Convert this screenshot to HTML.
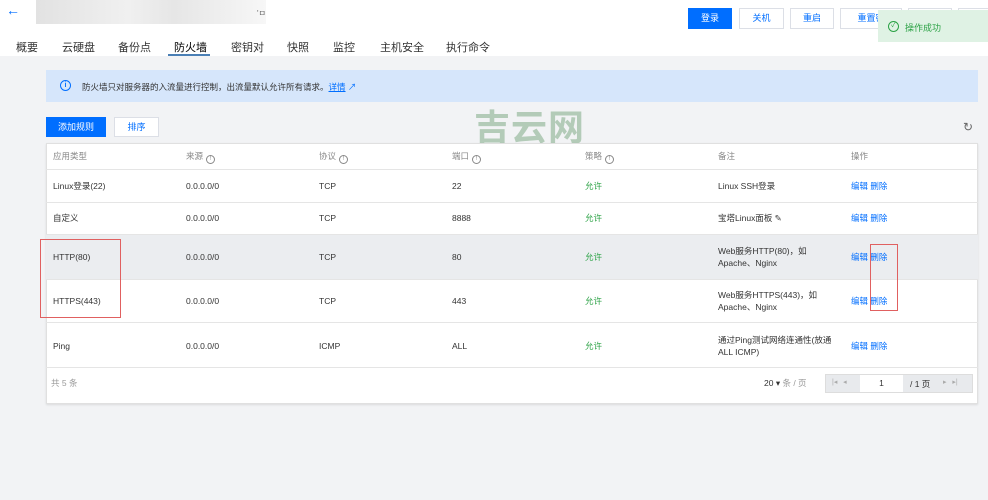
<!DOCTYPE html><html><head><meta charset="utf-8"><style>
*{margin:0;padding:0;box-sizing:border-box}
body{width:988px;height:500px;overflow:hidden;background:#f2f3f5;font-family:"Liberation Sans","Noto Sans CJK SC",sans-serif;font-size:9px;color:#333;position:relative}
.a{position:absolute}
.btn{position:absolute;height:21px;line-height:19px;text-align:center;border:1px solid #dcdfe6;background:#fff;color:#006eff;font-size:9px}
.tab{position:absolute;top:39px;font-size:11px;color:#333}
.row{position:absolute;left:46px;width:932px;border-bottom:1px solid #e5e5e5}
.c{position:absolute;font-size:8.5px;color:#333;line-height:12px}
.g{color:#2ba245}.l{color:#006eff}
.i{display:inline-block;width:9px;height:9px;border:1px solid #888;border-radius:50%;font-size:6px;line-height:7px;text-align:center;vertical-align:-1px;margin-left:3px;color:#888}
</style></head><body>
<div class="a" style="left:0;top:0;width:988px;height:56px;background:#fff"></div>
<div class="a" style="left:6px;top:2px;font-size:14px;color:#006eff">←</div>
<div class="a" style="left:36px;top:0;width:230px;height:24px;background:linear-gradient(90deg,#e2e2e2,#f0f0f0 40%,#e6e6e6 60%,#f7f7f7)"></div>
<div class="a" style="left:257px;top:8px;font-size:8px;color:#666">'ㅁ</div>
<div class="btn" style="left:688px;top:8px;width:44px;background:#006eff;color:#fff;border-color:#006eff">登录</div>
<div class="btn" style="left:739px;top:8px;width:45px">关机</div>
<div class="btn" style="left:790px;top:8px;width:44px">重启</div>
<div class="btn" style="left:840px;top:8px;width:62px">重置密</div>
<div class="btn" style="left:908px;top:8px;width:44px"></div>
<div class="btn" style="left:958px;top:8px;width:40px"></div>
<div class="a" style="left:878px;top:10px;width:110px;height:32px;background:#dff2e4"></div>
<div class="a" style="left:888px;top:21px;width:11px;height:11px;border:1.3px solid #2ba245;border-radius:50%;color:#2ba245;font-size:7px;line-height:8px;text-align:center">✓</div>
<div class="a" style="left:905px;top:21px;font-size:9px;color:#2ba245">操作成功</div>
<div class="tab" style="left:16px">概要</div><div class="tab" style="left:62px">云硬盘</div><div class="tab" style="left:118px">备份点</div>
<div class="tab" style="left:174px;color:#000">防火墙</div>
<div class="a" style="left:168px;top:54px;width:42px;height:2px;background:#4a7fb5"></div>
<div class="tab" style="left:231px">密钥对</div><div class="tab" style="left:287px">快照</div><div class="tab" style="left:333px">监控</div><div class="tab" style="left:380px">主机安全</div><div class="tab" style="left:446px">执行命令</div>
<div class="a" style="left:46px;top:70px;width:932px;height:32px;background:#d6e6fb"></div>
<div class="a" style="left:60px;top:80px;width:11px;height:11px;border:1.2px solid #006eff;border-radius:50%;color:#006eff;font-size:7px;line-height:9px;text-align:center;font-weight:bold">i</div>
<div class="a" style="left:82px;top:81px;font-size:8.5px;color:#333">防火墙只对服务器的入流量进行控制，出流量默认允许所有请求。<span class="l" style="text-decoration:underline">详情</span> <span class="l">↗</span></div>
<div class="btn" style="left:46px;top:117px;width:60px;height:20px;background:#006eff;color:#fff;border-color:#006eff">添加规则</div>
<div class="btn" style="left:114px;top:117px;width:45px;height:20px">排序</div>
<div class="a" style="left:474px;top:106px;font-size:36px;line-height:44px;color:#b3cbb8;font-weight:bold;letter-spacing:1px">吉云网</div>
<div class="a" style="left:963px;top:120px;font-size:12px;color:#666">↻</div>
<div class="a" style="left:46px;top:143px;width:932px;height:261px;background:#fff;border:1px solid #e0e0e0;box-shadow:0 1px 2px rgba(0,0,0,.1)"></div>
<div class="row" style="top:143px;height:27px"></div>
<div class="c" style="left:53px;top:150px;color:#888">应用类型</div><div class="c" style="left:186px;top:150px;color:#888">来源<span class="i">!</span></div><div class="c" style="left:319px;top:150px;color:#888">协议<span class="i">!</span></div><div class="c" style="left:452px;top:150px;color:#888">端口<span class="i">!</span></div><div class="c" style="left:585px;top:150px;color:#888">策略<span class="i">!</span></div><div class="c" style="left:718px;top:150px;color:#888">备注</div><div class="c" style="left:851px;top:150px;color:#888">操作</div>
<div class="row" style="top:170px;height:33px"></div>
<div class="c" style="left:53px;top:180px">Linux登录(22)</div><div class="c" style="left:186px;top:180px">0.0.0.0/0</div><div class="c" style="left:319px;top:180px">TCP</div><div class="c" style="left:452px;top:180px">22</div><div class="c g" style="left:585px;top:180px">允许</div><div class="c" style="left:718px;top:180px">Linux SSH登录</div><div class="c l" style="left:851px;top:180px">编辑 删除</div>
<div class="row" style="top:203px;height:32px"></div>
<div class="c" style="left:53px;top:212px">自定义</div><div class="c" style="left:186px;top:212px">0.0.0.0/0</div><div class="c" style="left:319px;top:212px">TCP</div><div class="c" style="left:452px;top:212px">8888</div><div class="c g" style="left:585px;top:212px">允许</div><div class="c" style="left:718px;top:212px">宝塔Linux面板 ✎</div><div class="c l" style="left:851px;top:212px">编辑 删除</div>
<div class="row" style="top:235px;height:45px;background:#ebedf0"></div>
<div class="c" style="left:53px;top:251px">HTTP(80)</div><div class="c" style="left:186px;top:251px">0.0.0.0/0</div><div class="c" style="left:319px;top:251px">TCP</div><div class="c" style="left:452px;top:251px">80</div><div class="c g" style="left:585px;top:251px">允许</div><div class="c" style="left:718px;top:245px">Web服务HTTP(80)，如<br>Apache、Nginx</div><div class="c l" style="left:851px;top:251px">编辑 删除</div>
<div class="row" style="top:280px;height:43px"></div>
<div class="c" style="left:53px;top:295px">HTTPS(443)</div><div class="c" style="left:186px;top:295px">0.0.0.0/0</div><div class="c" style="left:319px;top:295px">TCP</div><div class="c" style="left:452px;top:295px">443</div><div class="c g" style="left:585px;top:295px">允许</div><div class="c" style="left:718px;top:289px">Web服务HTTPS(443)，如<br>Apache、Nginx</div><div class="c l" style="left:851px;top:295px">编辑 删除</div>
<div class="row" style="top:323px;height:45px"></div>
<div class="c" style="left:53px;top:340px">Ping</div><div class="c" style="left:186px;top:340px">0.0.0.0/0</div><div class="c" style="left:319px;top:340px">ICMP</div><div class="c" style="left:452px;top:340px">ALL</div><div class="c g" style="left:585px;top:340px">允许</div><div class="c" style="left:718px;top:334px">通过Ping测试网络连通性(放通<br>ALL ICMP)</div><div class="c l" style="left:851px;top:340px">编辑 删除</div>
<div class="c" style="left:51px;top:377px;color:#999">共 5 条</div>
<div class="c" style="left:764px;top:377px">20 ▾ <span style="color:#999">条 / 页</span></div>
<div class="a" style="left:825px;top:374px;width:148px;height:19px;background:#e8eaed;border:1px solid #ddd"></div>
<div class="a" style="left:832px;top:378px;font-size:7px;color:#aaa">|◂ &nbsp;&nbsp;◂</div>
<div class="a" style="left:860px;top:375px;width:43px;height:17px;background:#fff;font-size:8.5px;text-align:center;line-height:17px">1</div>
<div class="c" style="left:910px;top:378px">/ 1 页</div>
<div class="a" style="left:943px;top:378px;font-size:7px;color:#aaa">▸ &nbsp;&nbsp;▸|</div>
<div class="a" style="left:40px;top:239px;width:81px;height:79px;border:1px solid #e06060"></div>
<div class="a" style="left:870px;top:244px;width:28px;height:67px;border:1px solid #e06060"></div>
</body></html>
